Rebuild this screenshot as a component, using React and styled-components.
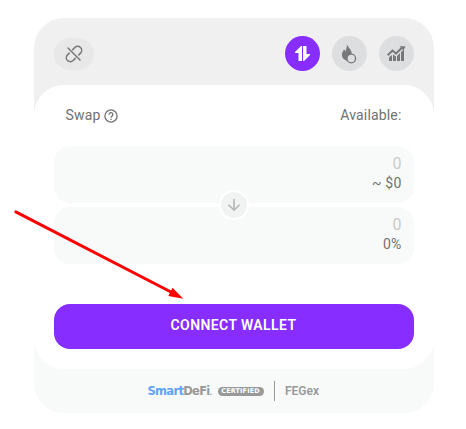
import React from 'react';
import styled, { createGlobalStyle } from 'styled-components';

const GlobalStyle = createGlobalStyle`
  * { box-sizing: border-box; }
  body {
    margin: 0;
    background: #fff;
    font-family: Roboto, "Liberation Sans", sans-serif;
    font-size: 14px;
    color: #707173;
    overflow: hidden;
  }
`;

const Page = styled.main`
  position: relative;
  width: 466px;
  height: 429px;
  padding: 18px 32px 16px 34px;
`;

const Card = styled.section`
  display: flex;
  flex-direction: column;
  height: 395px;
  border-radius: 30px;
  overflow: hidden;
  background: linear-gradient(#f0f0f0 50%, #f8faf9 50%);
`;

const Toolbar = styled.header`
  display: flex;
  align-items: center;
  justify-content: space-between;
  height: 67px;
  padding: 4px 20px 0;
`;

const Tabs = styled.nav`
  display: flex;
  gap: 12px;
`;

const IconButton = styled.button`
  display: flex;
  align-items: center;
  justify-content: center;
  width: ${(p) => (p.$wide ? 40 : 35)}px;
  height: ${(p) => (p.$wide ? 32 : 35)}px;
  padding: 0 1px 0 0;
  border: 0;
  border-radius: 18px;
  color: ${(p) => (p.$active ? '#fff' : '#77787a')};
  background: ${(p) => (p.$active ? '#872dff' : p.$wide ? '#e8e8e8' : '#dddee0')};
  svg { display: block; }
`;

const Panel = styled.div`
  height: 284px;
  padding: 20px 20px;
  border-radius: 30px;
  background: #fff;
`;

const Labels = styled.div`
  display: flex;
  justify-content: space-between;
  height: 41px;
  padding: 0 12.5px 0 11.5px;
  line-height: 20px;
  letter-spacing: 0.16px;
`;

const Label = styled.span`
  display: flex;
  gap: 3.5px;
  svg { margin-top: 4px; }
`;

const Fields = styled.div`
  position: relative;
  display: flex;
  flex-direction: column;
  gap: 4px;
`;

const Field = styled.div`
  display: flex;
  flex-direction: column;
  align-items: flex-end;
  height: 57px;
  padding: 8px 12.5px 0;
  border-radius: 16px;
  background: #f8faf9;
`;

const Amount = styled.span`
  font-size: 16px;
  line-height: 20px;
  color: #c9cacb;
`;

const Note = styled.span`
  line-height: 19px;
  letter-spacing: 0.2px;
`;

const SwitchButton = styled.button`
  position: absolute;
  left: 165px;
  top: 44px;
  display: flex;
  align-items: center;
  justify-content: center;
  width: 30px;
  height: 30px;
  padding: 0;
  border: 2px solid #fff;
  border-radius: 50%;
  background: #f1f2f2;
`;

const ConnectButton = styled.button`
  display: block;
  width: 100%;
  height: 45px;
  margin-top: 40px;
  padding: 0 1px 3px 0;
  border: 0;
  border-radius: 16px;
  background: #872dff;
  color: #fff;
  font: 600 14px Roboto, sans-serif;
  letter-spacing: 0.4px;
`;

const Footer = styled.footer`
  display: flex;
  align-items: center;
  height: 44px;
  padding-left: 113.5px;
  color: #999;
`;

const Brand = styled.span`
  width: 70px;
  white-space: nowrap;
  font: 700 11.5px "DejaVu Sans", sans-serif;
  letter-spacing: -0.7px;
  b { color: #62a3f8; font-weight: 700; }
  small { font-size: 7px; }
`;

const Badge = styled.span`
  display: flex;
  align-items: center;
  justify-content: center;
  width: 46px;
  height: 9px;
  border-radius: 5px;
  background: #999;
  color: #fff;
  font: 700 6.5px/9px "DejaVu Sans", sans-serif;
  letter-spacing: 0.1px;
`;

const Divider = styled.i`
  width: 1px;
  height: 20px;
  margin: 0 10px 0 10.5px;
  background: #999;
`;

const Product = styled.span`
  font: 600 12px Roboto, sans-serif;
`;

const Pointer = styled.svg`
  position: absolute;
  left: 0;
  top: 0;
  pointer-events: none;
`;

const UnlinkIcon = () => (
  <svg width="20" height="20" viewBox="-10 -10 20 20" fill="none" stroke="currentColor" strokeWidth="1.5" strokeLinecap="round">
    <g transform="rotate(-45)">
      <path d="M-2.800-4H-5.200a4 4 0 0 0 0 8H-2.200M2.200-4h3a4 4 0 0 1 0 8H2.800M0-8.500V8.500" />
    </g>
  </svg>
);

const SwapIcon = () => (
  <svg width="15" height="15" viewBox="0 0 15 15" fill="currentColor">
    <path d="M7 0v15H3.500V7H0V6l6-6z" />
    <path d="M8 0h3.500v8H15v1l-6 6H8z" />
  </svg>
);

const BurnIcon = () => (
  <svg width="19" height="21" viewBox="0 0 19 21">
    <path d="M6.800.8c.5 3.200 4.700 5.200 5 10l-4 3-.2 4.200C4 17 1.900 15 1.900 12c0-2.500 1.500-4 2.200-6 .7 1 1 1.800 1 2.800C6.500 7 7.100 3.500 6.800.8z" fill="currentColor" />
    <circle cx="11.300" cy="15.500" r="4.300" fill="#dddee0" stroke="currentColor" strokeWidth="1.300" />
  </svg>
);

const ChartIcon = () => (
  <svg width="19" height="17" viewBox="0 0 19 17" fill="currentColor">
    <path d="M2 12.200l3-2.200v6H2zM6 9.500l3 2V16H6zM10 11l3-3v8h-3zM14 7l3-2.500V16h-3z" />
    <path d="M.6 10.200L5.500 5.500l3.500 3L15 2.800" fill="none" stroke="currentColor" strokeWidth="2" />
    <path d="M12.500 1.200H18.500L16.500 5.500z" />
  </svg>
);

const HelpIcon = () => (
  <svg width="14" height="14" viewBox="0 0 14 14" fill="none" stroke="currentColor" strokeWidth="1.300">
    <circle cx="7" cy="7" r="6.100" />
    <path d="M5.100 5.700a1.900 1.900 0 1 1 2.900 1.500C7.300 7.700 7 8 7 8.700M7 9.700v1.300" />
  </svg>
);

const DownIcon = () => (
  <svg width="14" height="14" viewBox="0 0 14 14" fill="none" stroke="#b3b4b4" strokeWidth="1.600">
    <path d="M7 1v11M1.500 6.800L7 12.200l5.500-5.400" />
  </svg>
);

export default function App() {
  return (
    <>
      <GlobalStyle />
      <Page>
        <Card>
          <Toolbar>
            <IconButton $wide aria-label="Disconnected"><UnlinkIcon /></IconButton>
            <Tabs>
              <IconButton $active aria-label="Swap"><SwapIcon /></IconButton>
              <IconButton aria-label="Burn"><BurnIcon /></IconButton>
              <IconButton aria-label="Chart"><ChartIcon /></IconButton>
            </Tabs>
          </Toolbar>
          <Panel>
            <Labels>
              <Label>Swap <HelpIcon /></Label>
              <Label>Available:</Label>
            </Labels>
            <Fields>
              <Field><Amount>0</Amount><Note>~ $0</Note></Field>
              <Field><Amount>0</Amount><Note>0%</Note></Field>
              <SwitchButton aria-label="Switch direction"><DownIcon /></SwitchButton>
            </Fields>
            <ConnectButton>CONNECT WALLET</ConnectButton>
          </Panel>
          <Footer>
            <Brand><b>Smart</b>DeFi<small>.</small></Brand>
            <Badge>CERTIFIED</Badge>
            <Divider />
            <Product>FEGex</Product>
          </Footer>
        </Card>
        <Pointer width="466" height="429" viewBox="0 0 466 429">
          <path d="M15.800 211.800L171 292" stroke="#f00" strokeWidth="3" strokeLinecap="round" />
          <path d="M183.300 298.700l-10.800-11-4.200 8.300z" fill="#f00" />
        </Pointer>
      </Page>
    </>
  );
}
